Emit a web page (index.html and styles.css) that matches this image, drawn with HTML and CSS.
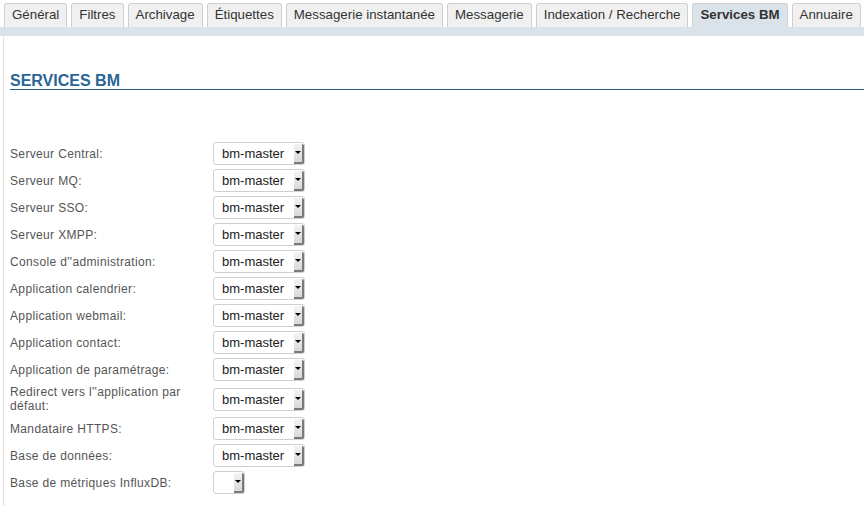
FILE: index.html
```html
<!DOCTYPE html>
<html lang="fr">
<head>
<meta charset="utf-8">
<title>Services BM</title>
<link rel="stylesheet" href="styles.css">
</head>
<body>
<div class="tabs">
  <div class="tab">Général</div>
  <div class="tab">Filtres</div>
  <div class="tab">Archivage</div>
  <div class="tab">Étiquettes</div>
  <div class="tab">Messagerie instantanée</div>
  <div class="tab">Messagerie</div>
  <div class="tab">Indexation / Recherche</div>
  <div class="tab active">Services BM</div>
  <div class="tab">Annuaire</div>
</div>
<div class="tabbar"></div>
<div class="content">
  <h2 class="title">SERVICES BM</h2>
  <div class="form">
    <div class="label">Serveur Central:</div>
    <div class="select"><span class="val">bm-master</span><span class="arrow"></span></div>
    <div class="label">Serveur MQ:</div>
    <div class="select"><span class="val">bm-master</span><span class="arrow"></span></div>
    <div class="label">Serveur SSO:</div>
    <div class="select"><span class="val">bm-master</span><span class="arrow"></span></div>
    <div class="label">Serveur XMPP:</div>
    <div class="select"><span class="val">bm-master</span><span class="arrow"></span></div>
    <div class="label">Console d''administration:</div>
    <div class="select"><span class="val">bm-master</span><span class="arrow"></span></div>
    <div class="label">Application calendrier:</div>
    <div class="select"><span class="val">bm-master</span><span class="arrow"></span></div>
    <div class="label">Application webmail:</div>
    <div class="select"><span class="val">bm-master</span><span class="arrow"></span></div>
    <div class="label">Application contact:</div>
    <div class="select"><span class="val">bm-master</span><span class="arrow"></span></div>
    <div class="label">Application de paramétrage:</div>
    <div class="select"><span class="val">bm-master</span><span class="arrow"></span></div>
    <div class="label">Redirect vers l''application par défaut:</div>
    <div class="select"><span class="val">bm-master</span><span class="arrow"></span></div>
    <div class="label">Mandataire HTTPS:</div>
    <div class="select"><span class="val">bm-master</span><span class="arrow"></span></div>
    <div class="label">Base de données:</div>
    <div class="select"><span class="val">bm-master</span><span class="arrow"></span></div>
    <div class="label">Base de métriques InfluxDB:</div>
    <div class="select empty"><span class="val"></span><span class="arrow"></span></div>
  </div>
</div>
</body>
</html>
```
FILE: styles.css
```css
html, body {
  margin: 0;
  padding: 0;
  background: #fff;
  font-family: "Liberation Sans", Arial, sans-serif;
  color: #555;
}
.tabs {
  display: flex;
  gap: 4px;
  padding: 3px 0 0 4px;
  height: 24px;
}
.tab {
  box-sizing: border-box;
  height: 24px;
  padding: 0 7px;
  line-height: 22px;
  font-size: 13.3px;
  color: #333;
  background: #f0f0f0;
  border: 1px solid #cfcfcf;
  border-bottom: none;
  border-radius: 3px 3px 0 0;
  white-space: nowrap;
}
.tab.active {
  background: #dbe3ea;
  font-weight: bold;
  color: #333;
}
.tabbar {
  height: 9px;
  background: #dbe3ea;
}
.content {
  margin-left: 3px;
  border-left: 1px solid #e0e0e0;
  padding: 36px 0 30px 6px;
}
.title {
  margin: 0;
  font-size: 16px;
  font-weight: bold;
  color: #2a6595;
  line-height: 17px;
  border-bottom: 1px solid #2d6088;
  padding-bottom: 0;
}
.form {
  display: grid;
  grid-template-columns: 196px auto;
  column-gap: 7px;
  row-gap: 4px;
  margin-top: 52px;
  align-items: center;
  justify-items: start;
}
.label {
  font-size: 12px;
  letter-spacing: 0.35px;
  line-height: 14px;
  color: #555;
  width: 188px;
}
.select {
  box-sizing: border-box;
  display: flex;
  align-items: stretch;
  height: 23px;
  width: 92px;
  border: 1px solid #d0d0d0;
  border-radius: 3px;
  background: #fff;
}
.select.empty {
  width: 32px;
}
.val {
  flex: 1;
  font-size: 13px;
  line-height: 21px;
  color: #222;
  padding-left: 8px;
}
.arrow {
  position: relative;
  width: 8px;
  margin: 1px 0 0 0;
  background: linear-gradient(#f4f4f4, #d8d8d8);
  border-right: 2px solid #7a7a7a;
  border-bottom: 2px solid #7a7a7a;
  border-radius: 0 2px 2px 0;
}
.arrow::after {
  content: "";
  position: absolute;
  left: 1px;
  top: 7px;
  border-left: 3px solid transparent;
  border-right: 3px solid transparent;
  border-top: 3px solid #000;
}
```
